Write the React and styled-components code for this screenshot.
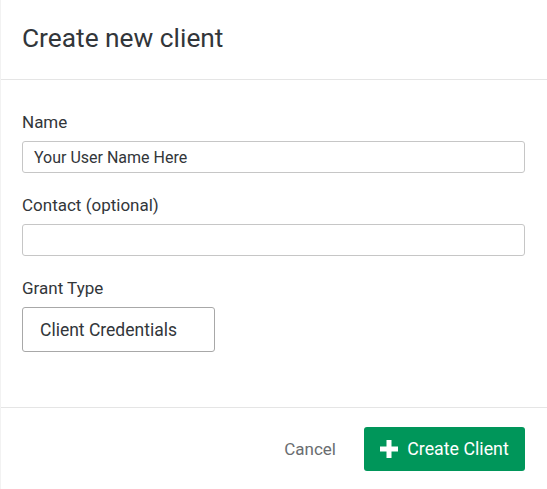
import styled, { createGlobalStyle } from "styled-components";

const GlobalStyle = createGlobalStyle`
  html, body {
    margin: 0;
    padding: 0;
    background: #ffffff;
  }
  body {
    font-family: Roboto, "Noto Sans", sans-serif;
    color: #32363a;
  }
`;

const Dialog = styled.div`
  width: 547px;
  height: 489px;
  display: flex;
  flex-direction: column;
  box-sizing: border-box;
  border-left: 1px solid #f2f2f2;
  background: #fff;
`;

const Header = styled.div`
  height: 80px;
  box-sizing: border-box;
  display: flex;
  align-items: center;
  padding: 0 22px 4px 21px;
  border-bottom: 1px solid #e5e5e5;
`;

const Title = styled.h1`
  margin: 0;
  font-size: 26.3px;
  font-weight: 400;
  color: #32363a;
`;

const Body = styled.div`
  flex: 1;
  display: flex;
  flex-direction: column;
  padding: 32px 22px 0 21px;
  border-bottom: 1px solid #e5e5e5;
`;

const Field = styled.div`
  display: flex;
  flex-direction: column;
  margin-bottom: 22px;
`;

const Label = styled.label`
  font-size: 17px;
  line-height: 20px;
  color: #32363a;
  margin-bottom: 9px;
`;

const Input = styled.div`
  height: 32px;
  box-sizing: border-box;
  border: 1px solid #c6c6c6;
  border-radius: 3px;
  padding: 0 11px;
  display: flex;
  align-items: center;
  font-size: 16px;
  color: #32363a;
`;

const Select = styled.div`
  width: 193px;
  height: 45px;
  box-sizing: border-box;
  border: 1px solid #a8a8a8;
  border-radius: 3px;
  padding: 0 17px;
  display: flex;
  align-items: center;
  font-size: 17.5px;
  color: #32363a;
`;

const Footer = styled.div`
  height: 81px;
  box-sizing: border-box;
  display: flex;
  align-items: center;
  justify-content: flex-end;
  gap: 28px;
  padding: 0 22px 0;
`;

const CancelButton = styled.button`
  border: none;
  background: none;
  font-family: inherit;
  font-size: 17px;
  color: #6a6d70;
  padding: 0;
  cursor: pointer;
`;

const PrimaryButton = styled.button`
  height: 44px;
  width: 161px;
  border: none;
  border-radius: 3px;
  background: #00965a;
  color: #fff;
  font-family: inherit;
  font-size: 17.8px;
  display: flex;
  align-items: center;
  justify-content: center;
  gap: 9px;
  cursor: pointer;
`;

function PlusIcon() {
  return (
    <svg width="18" height="18" viewBox="0 0 18 18">
      <path d="M6.5 0h5v6.5H18v5h-6.5V18h-5v-6.5H0v-5h6.5z" fill="#fff" />
    </svg>
  );
}

export default function App() {
  return (
    <>
      <GlobalStyle />
      <Dialog>
        <Header>
          <Title>Create new client</Title>
        </Header>
        <Body>
          <Field>
            <Label>Name</Label>
            <Input>Your User Name Here</Input>
          </Field>
          <Field>
            <Label>Contact (optional)</Label>
            <Input />
          </Field>
          <Field>
            <Label>Grant Type</Label>
            <Select>Client Credentials</Select>
          </Field>
        </Body>
        <Footer>
          <CancelButton>Cancel</CancelButton>
          <PrimaryButton>
            <PlusIcon />
            Create Client
          </PrimaryButton>
        </Footer>
      </Dialog>
    </>
  );
}
